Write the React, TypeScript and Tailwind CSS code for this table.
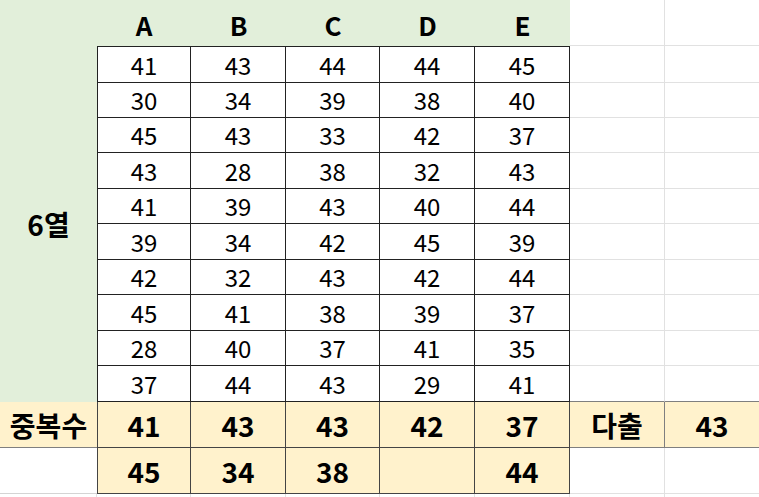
import React from 'react';

const DATA = [
  [41, 43, 44, 44, 45],
  [30, 34, 39, 38, 40],
  [45, 43, 33, 42, 37],
  [43, 28, 38, 32, 43],
  [41, 39, 43, 40, 44],
  [39, 34, 42, 45, 39],
  [42, 32, 43, 42, 44],
  [45, 41, 38, 39, 37],
  [28, 40, 37, 41, 35],
  [37, 44, 43, 29, 41],
];
const DUP = [41, 43, 43, 42, 37];
const EXTRA = ['45', '34', '38', '', '44'];
const HEAD = ['A', 'B', 'C', 'D', 'E'];

export default function App() {
  return (
    <div className="w-[759px] h-[497px] overflow-hidden bg-white text-black font-['Noto_Sans_CJK_KR','Liberation_Sans',sans-serif]">
      <div className="grid grid-cols-[97px_94px_95px_94px_95px_95px_95px_94px] grid-rows-[46px_37px_35px_35px_36px_35px_36px_35px_36px_35px_36px_46px_46px_3px]">
        {/* header row */}
        <div className="bg-[#e2efda]" />
        {HEAD.map((h) => (
          <div key={h} className="bg-[#e2efda] flex items-center justify-center pt-[2px] text-[26px] font-bold">{h}</div>
        ))}
        <div className="border-b border-r border-[#e1e1e1]" />
        <div className="border-b border-[#e1e1e1]" />

        {/* body rows */}
        {DATA.map((row, r) => (
          <React.Fragment key={r}>
            {r === 0 && (
              <div className="row-span-10 bg-[#e2efda] flex items-center justify-center text-[28px] font-bold">6열</div>
            )}
            {row.map((v, c) => (
              <div
                key={c}
                className={`flex items-center justify-center text-[24px] border-r border-b border-[#222] ${r === 0 ? 'border-t' : ''} ${c === 0 ? 'border-l' : ''}`}
              >
                {v}
              </div>
            ))}
            <div className={`border-r ${r === 9 ? 'border-b-[#7f7f7f]' : 'border-b-[#e1e1e1]'} border-b border-r-[#e1e1e1]`} />
            <div className={`border-b ${r === 9 ? 'border-[#7f7f7f]' : 'border-[#e1e1e1]'}`} />
          </React.Fragment>
        ))}

        {/* duplicate row */}
        <div className="bg-[#fff2cc] border-b border-[#7f7f7f] flex items-center justify-center text-[28px] font-bold">중복수</div>
        {DUP.map((v, c) => (
          <div key={c} className={`bg-[#fff2cc] border-r border-b border-[#444] flex items-center justify-center text-[28px] font-bold ${c === 0 ? 'border-l' : ''}`}>{v}</div>
        ))}
        <div className="bg-[#fff2cc] border-r border-b border-[#7f7f7f] flex items-center justify-center text-[28px] font-bold">다출</div>
        <div className="bg-[#fff2cc] border-b border-[#7f7f7f] flex items-center justify-center text-[28px] font-bold">43</div>

        {/* extra row */}
        <div className="border-b border-[#d4d4d4]" />
        {EXTRA.map((v, c) => (
          <div key={c} className={`bg-[#fff2cc] border-r border-b border-[#444] flex items-center justify-center text-[28px] font-bold ${c === 0 ? 'border-l' : ''}`}>{v}</div>
        ))}
        <div className="border-r border-b border-[#e1e1e1]" />
        <div className="border-b border-[#e1e1e1]" />

        {/* bottom sliver */}
        <div className="border-r border-[#e1e1e1]" />
        <div className="border-r border-[#e1e1e1]" />
        <div className="border-r border-[#e1e1e1]" />
        <div className="border-r border-[#e1e1e1]" />
        <div className="border-r border-[#e1e1e1]" />
        <div className="border-r border-[#e1e1e1]" />
        <div className="border-r border-[#e1e1e1]" />
        <div />
      </div>
    </div>
  );
}
